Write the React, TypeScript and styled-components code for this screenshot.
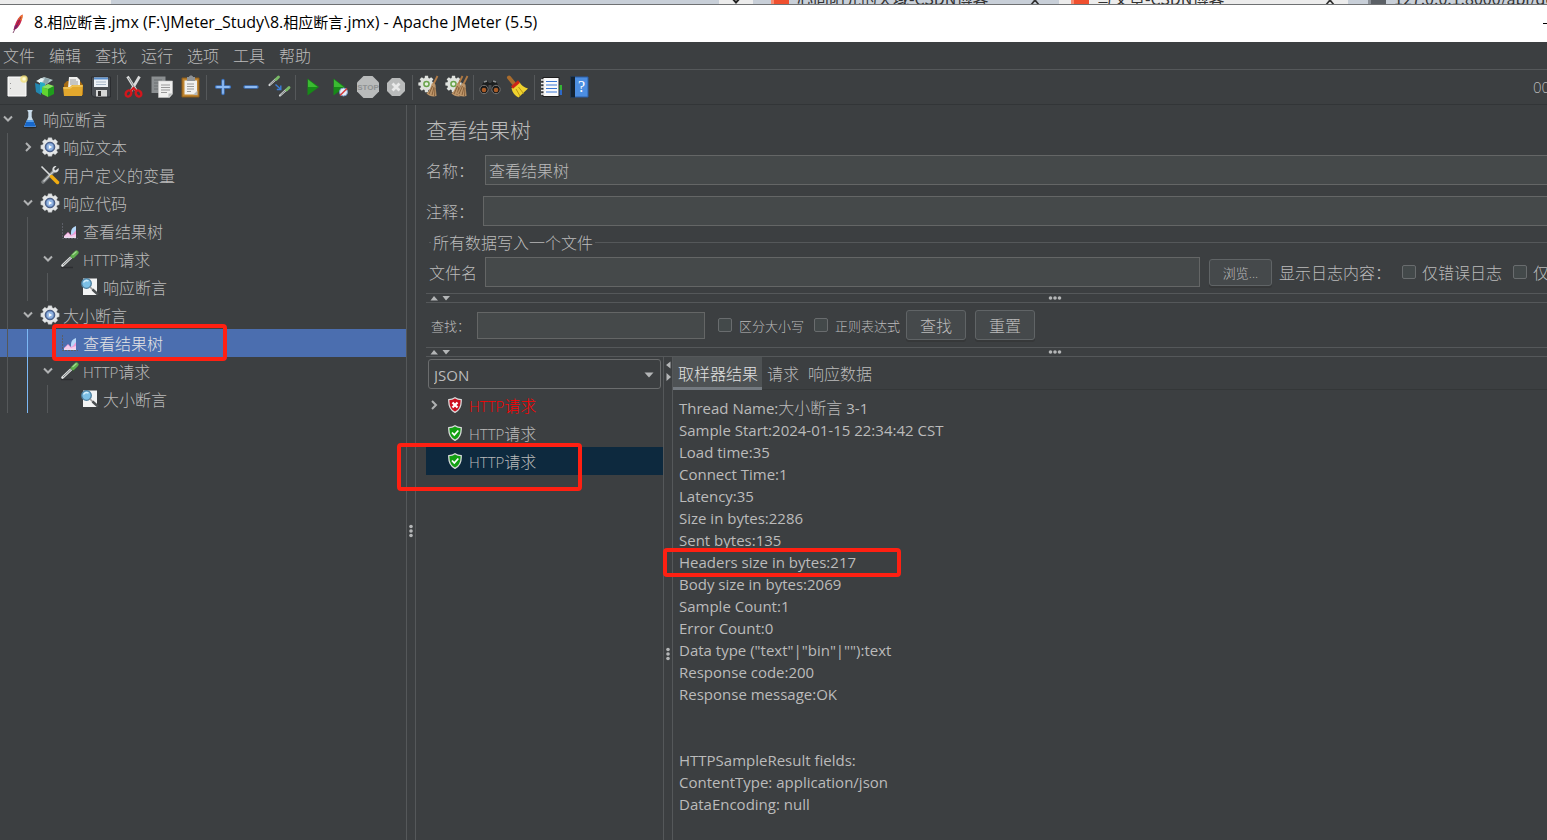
import React from "react";
import styled, { createGlobalStyle, css } from "styled-components";

const c = {
  bg: "#3c3f41",
  line: "#55585a",
  text: "#bbbbbb",
  field: "#45494a",
  border: "#646666",
  select: "#4b6eaf",
  listSelect: "#0d293e",
  mark: "#ff2012",
};

const GlobalStyle = createGlobalStyle`
  * { box-sizing: border-box; }
  body { margin: 0; background: ${c.bg}; overflow: hidden; }
  body, button, input, select {
    font-family: "Open Sans", "Noto Sans CJK SC", sans-serif;
    font-size: 16px;
    font-weight: 300;
    color: ${c.text};
  }
  button { background: none; border: 0; padding: 0; margin: 0; }
`;

const Window = styled.div`
  display: flex;
  flex-direction: column;
  height: 100vh;
  overflow: hidden;
  background: ${c.bg};
`;

/* ---------- browser strip behind the window ---------- */
const BrowserStrip = styled.div`
  display: flex;
  height: 5px;
  flex: none;
  overflow: hidden;
  border-bottom: 1px solid #6f7173;
  background: #c6cdd6;
`;
const StripPart = styled.div<{ $w?: number; $light?: boolean; $pad?: number }>`
  display: flex;
  align-items: flex-end;
  height: 4px;
  width: ${(p) => (p.$w ? p.$w + "px" : "auto")};
  flex: ${(p) => (p.$w ? "none" : "1")};
  padding: 0 ${(p) => p.$pad ?? 0}px;
  background: ${(p) => (p.$light ? "#ececec" : "#c8cfd8")};
  overflow: hidden;
`;
const StripText = styled.span`
  flex: 1;
  min-width: 0;
  margin: 0 0 -5px 8px;
  font-family: "Noto Sans CJK SC", sans-serif;
  font-size: 16px;
  line-height: 22px;
  font-weight: 400;
  color: #333;
  white-space: nowrap;
`;
const Favicon = styled.span<{ $grey?: boolean }>`
  width: 18px;
  height: 4px;
  flex: none;
  background: ${(p) => (p.$grey ? "#5b6066" : "#f0502f")};
  border-left: 3px solid ${(p) => (p.$grey ? "#8b9097" : "#f88a70")};
`;

/* ---------- title, menu, toolbar ---------- */
const TitleBar = styled.header`
  display: flex;
  align-items: center;
  flex: none;
  height: 37px;
  padding-left: 8px;
  gap: 6px;
  background: #fff;
  color: #000;
  font-weight: 400;
  white-space: pre;
`;
const TitleText = styled.span`
  flex: 1;
  margin-bottom: 3px;
`;
const TitleCjk = styled.span`
  font-size: 15px;
`;
const Minimise = styled.button`
  width: 4px;
  height: 1px;
  background: #000;
`;
const MenuBar = styled.nav`
  display: flex;
  flex: none;
  height: 28px;
  padding: 0 0 2px 3px;
  gap: 14px;
  border-bottom: 1px solid ${c.line};
`;
const MenuItem = styled.button`
  width: 32px;
  white-space: nowrap;
`;
const Toolbar = styled.div`
  display: flex;
  align-items: center;
  flex: none;
  height: 35px;
  padding-left: 3px;
  border-bottom: 1px solid #323537;
`;
const ToolButton = styled.button`
  display: grid;
  place-items: center;
  width: 28px;
  height: 28px;
`;
const ToolSep = styled.span`
  width: 1px;
  height: 25px;
  margin: 0 2px;
  background: ${c.line};
`;
const Clock = styled.span`
  width: 14px;
  margin-left: auto;
  overflow: hidden;
  font-size: 15px;
`;

/* ---------- body ---------- */
const Body = styled.div`
  display: flex;
  flex: 1;
  min-height: 0;
`;
const Tree = styled.div`
  width: 406px;
  flex: none;
`;
const VSplit = styled.div<{ $top: number }>`
  position: relative;
  display: flex;
  flex-direction: column;
  align-items: center;
  width: 10px;
  flex: none;
  border-left: 1px solid ${c.line};
  border-right: 1px solid ${c.line};
  padding-top: ${(p) => p.$top}px;
`;
const ArrowPair = styled.div`
  position: absolute;
  top: 4px;
  left: 1px;
  display: flex;
`;
const TreeRow = styled.div<{ $selected?: boolean }>`
  position: relative;
  display: flex;
  align-items: center;
  height: 28px;
  white-space: nowrap;
  background: ${(p) => (p.$selected ? c.select : "transparent")};
  color: ${(p) => (p.$selected ? "#e4e4e4" : c.text)};
`;
const Guide = styled.span<{ $kind: "line" | "blue" | "none" }>`
  width: 13px;
  height: 28px;
  margin-left: 7px;
  flex: none;
  border-left: 1px solid
    ${(p) => (p.$kind === "line" ? "#55585a" : p.$kind === "blue" ? "#7cb8f5" : "transparent")};
`;
const Chevron = styled.span`
  display: grid;
  place-items: center;
  width: 15px;
  flex: none;
`;
const TreeIcon = styled.span`
  display: grid;
  place-items: center;
  width: 22px;
  margin: 0 2px 0 4px;
  flex: none;
`;
const Latin = styled.span`
  font-size: 15px;
`;
const Mark = styled.span<{ $x: number; $y: number; $w: number; $h: number }>`
  position: absolute;
  z-index: 2;
  left: ${(p) => p.$x}px;
  top: ${(p) => p.$y}px;
  width: ${(p) => p.$w}px;
  height: ${(p) => p.$h}px;
  border: 4px solid ${c.mark};
  border-radius: 4px;
  pointer-events: none;
`;

const Panel = styled.main`
  display: flex;
  flex-direction: column;
  flex: 1;
  min-width: 0;
  padding-left: 10px;
`;
const Heading = styled.h1`
  margin: 0;
  height: 50px;
  flex: none;
  font-size: 21px;
  line-height: 50px;
  font-weight: 300;
`;
const inputBox = css`
  height: 30px;
  padding: 0 3px;
  border: 1px solid ${c.border};
  border-radius: 0;
  background: ${c.field};
  outline: 0;
`;
const FormRow = styled.div<{ $gap: number; $label: number }>`
  display: flex;
  align-items: center;
  flex: none;
  margin-bottom: ${(p) => p.$gap}px;
  label:first-child {
    width: ${(p) => p.$label}px;
    flex: none;
  }
`;
const WideInput = styled.input`
  ${inputBox}
  flex: 1;
  min-width: 0;
  margin-right: -2px;
`;
const FileGroup = styled.fieldset`
  margin: 0;
  padding: 0 0 0 3px;
  border: 0;
  min-width: 0;
  flex: none;
  height: 63px;
  overflow: hidden;
`;
const GroupTitle = styled.div`
  display: flex;
  align-items: center;
  gap: 2px;
  height: 24px;
  white-space: nowrap;
  &::before, &::after {
    content: "";
    height: 1px;
    width: 2px;
    background: ${c.line};
  }
  &::after { flex: 1; }
`;
const FileRow = styled.div`
  display: flex;
  align-items: center;
  height: 30px;
  margin-top: 3px;
  white-space: nowrap;
`;
const FileInput = styled.input`
  ${inputBox}
  flex: 1;
  min-width: 0;
  margin: 0 9px 0 8px;
`;
const Button = styled.button<{ $small?: boolean }>`
  flex: none;
  width: ${(p) => (p.$small ? 63 : 60)}px;
  height: ${(p) => (p.$small ? 27 : 30)}px;
  border: 1px solid #606466;
  border-radius: 3px;
  background: #45494b;
  box-shadow: 0 2px 0 #363839;
  font-size: ${(p) => (p.$small ? 13 : 16)}px;
`;
const LogLabel = styled.span`
  width: 123px;
  flex: none;
  margin-left: 7px;
`;
const CheckLabel = styled.label<{ $w?: number; $small?: boolean; $gap?: number }>`
  display: flex;
  align-items: center;
  gap: ${(p) => p.$gap ?? 6}px;
  width: ${(p) => p.$w}px;
  flex: none;
  overflow: hidden;
  white-space: nowrap;
  font-size: ${(p) => (p.$small ? 13 : 16)}px;
`;
const Check = styled.input`
  appearance: none;
  width: 14px;
  height: 14px;
  flex: none;
  margin: 0;
  border: 1px solid #696c6e;
  border-radius: 2px;
  background: #43494a;
`;
const HSplit = styled.div`
  display: flex;
  align-items: center;
  flex: none;
  height: 10px;
  padding-left: 4px;
  gap: 598px;
  border-top: 1px solid ${c.line};
  border-bottom: 1px solid ${c.line};
`;
const SearchRow = styled.div`
  display: flex;
  align-items: center;
  flex: none;
  height: 44px;
  padding-left: 5px;
  font-size: 13px;
  label:first-child {
    width: 46px;
    flex: none;
  }
`;
const SearchInput = styled.input`
  ${inputBox}
  height: 27px;
  width: 228px;
  margin-right: 13px;
`;
const Buttons = styled.div`
  display: flex;
  gap: 9px;
  margin-left: 4px;
`;
const Results = styled.div`
  display: flex;
  flex: 1;
  min-height: 0;
`;
const ResultList = styled.div`
  width: 237px;
  flex: none;
  padding-top: 2px;
`;
const SelectWrap = styled.div`
  position: relative;
  height: 32px;
  padding: 0 2px;
`;
const Select = styled.select`
  appearance: none;
  display: block;
  width: 100%;
  height: 30px;
  padding: 2px 5px 0;
  border: 1px solid #6b6d6e;
  border-radius: 3px;
  background: ${c.bg};
  font-size: 15px;
  font-weight: 400;
`;
const SelectArrow = styled.svg`
  position: absolute;
  right: 9px;
  top: 13px;
  pointer-events: none;
`;
const ResultRow = styled.div<{ $selected?: boolean; $error?: boolean }>`
  position: relative;
  display: flex;
  align-items: center;
  height: 28px;
  white-space: nowrap;
  background: ${(p) => (p.$selected ? c.listSelect : "transparent")};
  color: ${(p) => (p.$error ? "#ff0000" : c.text)};
`;
const ShieldBox = styled.span`
  display: grid;
  place-items: center;
  width: 20px;
  margin: 0 4px;
`;
const Detail = styled.section`
  display: flex;
  flex-direction: column;
  flex: 1;
  min-width: 0;
`;
const Tabs = styled.div`
  display: flex;
  flex: none;
  height: 33px;
  border-bottom: 1px solid #343738;
`;
const Tab = styled.button<{ $active?: boolean }>`
  height: 33px;
  padding: 2px 4px 0 5px;
  border-bottom: 3px solid ${(p) => (p.$active ? "#747a80" : "transparent")};
  background: ${(p) => (p.$active ? "#4e5254" : "transparent")};
  background-clip: padding-box;
  color: ${(p) => (p.$active ? "#e0e0e0" : c.text)};
`;
const Report = styled.div`
  padding: 7px 0 0 6px;
  font-size: 15px;
  font-weight: 400;
  line-height: 22px;
`;
const ReportLine = styled.div`
  position: relative;
  height: 22px;
  white-space: nowrap;
`;
const Cjk = styled.span`
  font-size: 16px;
  font-weight: 300;
`;

/* ---------- small drawings ---------- */
const Dots = ({ vertical }: { vertical?: boolean }) => (
  <svg width={vertical ? 4 : 14} height={vertical ? 14 : 4} viewBox={vertical ? "0 0 4 14" : "0 0 14 4"} fill="#b4b6b7">
    {[2.5, 7, 11.5].map((p) => (
      <circle key={p} cx={vertical ? 2 : p} cy={vertical ? p : 2} r="1.8" />
    ))}
  </svg>
);
const UpDown = () => (
  <svg width="20" height="6" viewBox="0 0 20 6" fill="#b4b6b7">
    <path d="M0.5 5.5L4 1L8 5.5zM12.5 1h7.5L16 5.5z" />
  </svg>
);
const LeftRight = () => (
  <svg width="7" height="20" viewBox="0 0 7 20" fill="#b4b6b7">
    <path d="M5.500 0.500v7L1 4zM1.500 12v8L6 16z" />
  </svg>
);
const Chev = ({ open }: { open?: boolean }) => (
  <svg width="12" height="12" viewBox="0 0 12 12" fill="none" stroke="#b0b2b3" strokeWidth="2">
    <path d={open ? "M2 3.500L6 7.500L10 3.500" : "M4 2L8 6L4 10"} />
  </svg>
);
const StripArrow = () => (
  <svg width="12" height="4" viewBox="0 0 12 4"><path d="M2 -2L6 2.500L10 -2" fill="none" stroke="#222" strokeWidth="2" /></svg>
);
const StripClose = () => (
  <svg width="12" height="4" viewBox="0 0 12 4"><path d="M2 5L6 0L10 5" fill="none" stroke="#333" strokeWidth="1.700" /></svg>
);

const svg = (w: number, kids: React.ReactNode, h = w) => (
  <svg width={w} height={h} viewBox={`0 0 ${w} ${h}`}>{kids}</svg>
);

const Feather = () => (
  <svg width="20" height="20" viewBox="0 0 20 20">
    <path d="M14.500 0.500C11.500 2 8.500 6 7 11L5.500 16L8.500 14.500C12 12 14.500 6 14.500 0.500z" fill="#c7254e" />
    <path d="M14.500 0.500C12.500 1.500 11 3.500 10 5.500L13.500 6.500C14.500 4 15 2 14.500 0.500z" fill="#f2762a" />
    <path d="M7 11L5.500 16L8.500 14.500L10.500 11z" fill="#8a2676" />
    <path d="M13 3L5 19" stroke="#6b2350" strokeWidth="0.8" />
  </svg>
);
const FlaskIcon = () => svg(20, <>
  <ellipse cx="10" cy="18" rx="7" ry="1.300" fill="#25282a" />
  <path d="M7.500 1h5v1l-.8 1v5l4.300 10H4l4.300-10V3L7.500 2z" fill="#c9dcea" />
  <path d="M7 11h6l3 6.800H4z" fill="#1768cc" /><path d="M7 11h6l.9 2H6.100z" fill="#59a0ea" />
</>);
const gearPath = (cx: number, cy: number, r1: number, r2: number) => {
  const pts: string[] = [];
  for (let i = 0; i < 8; i++) {
    [[-0.3, r1], [-0.19, r2], [0.19, r2], [0.3, r1]].forEach(([d, r]) => {
      const a = (i * Math.PI) / 4 + d;
      pts.push(`${(cx + r * Math.sin(a)).toFixed(2)} ${(cy - r * Math.cos(a)).toFixed(2)}`);
    });
  }
  return "M" + pts.join("L") + "z";
};
const GearIcon = () => svg(20, <>
  <path d={gearPath(10, 10, 7.5, 9.3)} fill="#e4e6e7" stroke="#b9bcbe" strokeWidth="0.5" />
  <circle cx="10" cy="10" r="4.800" fill="#5f7fb4" stroke="#3f527a" strokeWidth="1" />
  <circle cx="10" cy="10" r="3.400" fill="#8fb2e0" /><path d="M8.800 8L12.200 10L8.800 12z" fill="#fff" />
</>);
const ToolsIcon = () => svg(20, <>
  <path d="M3 17L13.500 6.500" stroke="#777b7d" strokeWidth="3.500" strokeLinecap="round" />
  <path d="M3.500 16.500L14 6" stroke="#c9cccd" strokeWidth="1.500" />
  <path d="M18.500 3l-3 2.500-1.500-1.500 2.500-3C13.500 0.500 12 3 12.500 5.500l2 2C17 8 19.500 6 18.500 3z" fill="#dcdedf" />
  <path d="M1.500 1.500L11 11" stroke="#d8dadb" strokeWidth="1.600" />
  <path d="M11.500 11.500L17.500 17.500" stroke="#f0ac10" strokeWidth="3.500" strokeLinecap="round" />
</>);
const ChartIcon = () => svg(16, <>
  <path d="M.5 0v15.500H16" stroke="#5c5e66" strokeDasharray="2 1" fill="none" />
  <path d="M9 14V9c0-3 2-5 5-6v11z" fill="#b5d8fa" />
  <path d="M2 15v-2l4-4 3 3 2-1 3-4v8z" fill="#ee9ad6" />
  <path d="M2 13.500l4-3.500 3 3 2-1 3-1v4H2z" fill="#f4cdec" /><path d="M2 14.500h12" stroke="#e8ddf0" />
</>);
const DropperIcon = () => svg(20, <>
  <path d="M1 18.500h12" stroke="#2c2e30" strokeWidth="1.500" />
  <path d="M2.500 16.500L11.500 8" stroke="#dfe1e1" strokeWidth="2.600" strokeLinecap="round" />
  <path d="M3 16L11 8.500" stroke="#74787a" strokeWidth="0.900" />
  <path d="M10 6L14 10" stroke="#2f5b2c" strokeWidth="1.600" />
  <path d="M13 7L16.500 3.500" stroke="#5fae4d" strokeWidth="4.200" strokeLinecap="round" />
  <path d="M12.500 6L16.500 2.500" stroke="#a5da93" strokeWidth="1.200" />
</>);
const MagnifierIcon = () => svg(20, <>
  <path d="M3 1.500h14V18H3z" fill="#f3f4f4" />
  <circle cx="6.500" cy="6.500" r="4.800" fill="#7cc0e6" stroke="#4d7f9f" strokeWidth="1.300" />
  <path d="M3.500 5.500c1-2 3-2.500 5-1.500" stroke="#d6effc" strokeWidth="1.400" fill="none" />
  <path d="M10 10l3 3" stroke="#999" strokeWidth="1.600" /><path d="M12.500 12.500l5.500 5" stroke="#4b4f51" strokeWidth="2.400" />
</>);
const Shield = ({ ok }: { ok?: boolean }) => svg(16, <>
  <path d="M8 .7C6 2.200 4 2.600 1.800 2.600 1.500 8 2.500 12.500 8 15.300 13.500 12.500 14.500 8 14.200 2.600 12 2.600 10 2.200 8 .7z"
    fill={ok ? "#12a012" : "#cc1020"} stroke="#d9dbdb" strokeWidth="1.300" />
  {ok ? <path d="M5 7.500l2.300 2.500L11.300 5.500" stroke="#fff" strokeWidth="1.800" fill="none" />
    : <path d="M5.500 5.500l5 5M10.500 5.500l-5 5" stroke="#fff" strokeWidth="2.200" />}
</>);

const broom = (x: number) => (
  <g transform={`translate(${x} 0)`}>
    <path d="M18.500 1L14.500 9" stroke="#b07a45" strokeWidth="1.800" />
    <path d="M13 8l3.500 1.500L17.500 21C14 22 10 21 7.500 18.500c3-2.500 4-6 5.500-10.500z" fill="#bd9569" />
    <path d="M13.500 11L10 19M15 12l-2 8M16 13l-.5 8" stroke="#805a35" strokeWidth="0.900" />
  </g>
);
const toolGear = (
  <>
    <path d={gearPath(8.5, 9, 6.3, 8.3)} fill="#dfe2de" />
    <circle cx="8.500" cy="9" r="3.300" fill="#69a34b" /><circle cx="8.500" cy="9" r="1.800" fill="#e5efe0" />
  </>
);
const pipette = (x: number, y: number) => (
  <g transform={`translate(${x} ${y})`}>
    <path d="M1 9L7 3.500" stroke="#d3d6d6" strokeWidth="2.200" strokeLinecap="round" />
    <path d="M1.500 8.500L6.500 4" stroke="#55595b" strokeWidth="0.700" />
    <path d="M7.500 3.500L10 1" stroke="#79b967" strokeWidth="2.800" strokeLinecap="round" />
  </g>
);

const tools: ({ name: string; art: React.ReactNode } | null)[] = [
  { name: "新建", art: <>
    <path d="M3 2h18v19H3z" fill="#e9e9e7" stroke="#fff" /><path d="M5.500 8v1M5.500 13v1" stroke="#999" />
    <circle cx="19" cy="4" r="3.800" fill="#f2df71" opacity=".75" /><circle cx="19" cy="4" r="1.700" fill="#fffbd0" /></> },
  { name: "模板", art: <>
    <path d="M3 6l8-4 9 3-8 5z" fill="#b7c9cd" /><path d="M2 8l6 2v10l-5-3z" fill="#2287b0" /><path d="M4 6l4-3 3 1-3 5z" fill="#e7f3f3" />
    <path d="M7 7l5 1v12l-5-3z" fill="#25abc4" /><path d="M12 3l5 1-3 5-4-1z" fill="#8ba5ab" /><path d="M9 12l6 2v8l-6-3z" fill="#61d431" />
    <path d="M15 14l6-3v8l-6 3z" fill="#1f9d1c" /><path d="M9 12l6-3 6 2-6 3z" fill="#8be35e" /></> },
  { name: "打开", art: <>
    <path d="M3 9l3-3h13l3 4v10H3z" fill="#a66b12" /><path d="M8 2h8l3 3v8H7z" fill="#f1f1ef" /><path d="M9 5h6M9 7h8M9 9h8" stroke="#999" />
    <path d="M2 12h7l2-2h11l-1 11H3z" fill="#e3a82d" /><path d="M2.500 13h7l2-2h10" stroke="#f7d777" fill="none" /></> },
  { name: "保存", art: <>
    <path d="M2.500 2h19v20h-17l-2-2z" fill="#4b4f54" stroke="#2b2d30" /><path d="M5 2.500h14V12H5z" fill="#eef2f7" />
    <path d="M5 3.500h14" stroke="#5b91cf" strokeWidth="2" /><path d="M7 7h10M7 9.500h10" stroke="#a8b7c8" />
    <path d="M7 15h11v6.500H7z" fill="#d6d7d7" /><path d="M9 16h3v5H9z" fill="#333" /></> },
  null,
  { name: "剪切", art: <>
    <path d="M5.500 1.500L14.500 16M17.500 1.500L9 16" stroke="#d9dada" strokeWidth="2.800" /><path d="M6.500 3l7 11" stroke="#8a8e8f" />
    <ellipse cx="6.500" cy="18.500" rx="2.600" ry="3.200" fill="none" stroke="#d3161c" strokeWidth="2.400" transform="rotate(35 6.500 18.500)" />
    <ellipse cx="16.500" cy="18.500" rx="2.600" ry="3.200" fill="none" stroke="#d3161c" strokeWidth="2.400" transform="rotate(-35 16.500 18.500)" />
    <path d="M8.500 16L11.500 13L14.500 16" stroke="#d3161c" strokeWidth="2.200" fill="none" /></> },
  { name: "复制", art: <>
    <path d="M1.500 1.500h14V18h-14z" fill="#8b8f91" /><path d="M4 5h8M4 8h5M4 11h4M4 14h4" stroke="#6c7072" />
    <path d="M8.500 6h14v13l-3 3.500h-11z" fill="#efefee" stroke="#c5c5c5" strokeWidth=".6" /><path d="M11 10h9M11 12.500h9M11 15h9M11 17.500h6" stroke="#999" /><path d="M22.500 18.500h-4v4z" fill="#b9bbbb" /></> },
  { name: "粘贴", art: <>
    <path d="M4 3h17v19H4z" fill="#c08530" stroke="#8a5a18" /><path d="M6.500 5.500h12.500v14H6.500z" fill="#f0f0ee" />
    <path d="M9 2h2c0-2 4-2 4 0h2v4H9z" fill="#8e9295" /><path d="M9 9h7M9 11.500h7M9 14h7M9 16.500h4" stroke="#9a9a9a" /><path d="M15 20l4.500-4.500V20z" fill="#b6b8b8" /></> },
  null,
  { name: "展开", art: <><path d="M12 5.500v13M5.500 12h13" stroke="#3f74bd" strokeWidth="3.400" strokeLinecap="round" /><path d="M12 6v12M6 12h12" stroke="#8dbaf2" strokeWidth="1.800" strokeLinecap="round" /></> },
  { name: "折叠", art: <><path d="M6 12h12" stroke="#3f74bd" strokeWidth="3.400" strokeLinecap="round" /><path d="M6.500 12h11" stroke="#8dbaf2" strokeWidth="1.800" strokeLinecap="round" /></> },
  { name: "切换", art: <>{pipette(1.5, 1)}{pipette(12, 11.5)}<path d="M8.500 9.500l5 4.500M13.800 10.500v4h-4" stroke="#3d7ed8" strokeWidth="1.400" fill="none" /></> },
  null,
  { name: "启动", art: <><path d="M7.500 3.500L19 12L7.500 20.500z" fill="#178a18" /><path d="M8 4.500L17.500 12H8z" fill="#3bbb32" /></> },
  { name: "不停顿开始", art: <><path d="M5.500 3.500L17 12L5.500 20.500z" fill="#178a18" /><path d="M6 4.500L15.500 12H6z" fill="#3bbb32" />
    <circle cx="15.500" cy="17" r="4" fill="#e7eef7" stroke="#7a9bc8" /><path d="M12 20.500L19 13.500" stroke="#d33c3c" strokeWidth="1.600" /></> },
  { name: "停止", art: <><path d="M7.500 1h9L23 7.500v9L16.500 23h-9L1 16.500v-9z" fill="#b9bbbb" />
    <text x="12" y="15" textAnchor="middle" fontSize="8" fontWeight="700" fontFamily="Liberation Sans, sans-serif" fill="#8f9292">STOP</text></> },
  { name: "关闭", art: <><path d="M8 3h8l5 5v8l-5 5H8l-5-5V8z" fill="#b9bbbb" /><path d="M8.500 8.500l7 7M15.500 8.500l-7 7" stroke="#e8e9e9" strokeWidth="2.800" /></> },
  null,
  { name: "清除", art: <g transform="translate(1 0)">{toolGear}{broom(1)}</g> },
  { name: "清除全部", art: <g>{toolGear}{broom(-1)}{broom(4)}</g> },
  null,
  { name: "查找", art: <>
    <path d="M5 8l4-3 2 3h2l2-3 4 3 3 6H2z" fill="#1d1f20" /><path d="M6 7l3-1M15 6l3 1" stroke="#8c9092" strokeWidth="1.500" /><circle cx="6" cy="14.500" r="4.200" fill="#191919" stroke="#777" />
    <circle cx="18" cy="14.500" r="4.200" fill="#191919" stroke="#777" /><circle cx="6" cy="15" r="2.300" fill="#a95c28" /><circle cx="18" cy="15" r="2.300" fill="#a95c28" />
    <path d="M10.500 10h3v4h-3z" fill="#4b4e50" /></> },
  { name: "重置查找", art: <>
    <path d="M3 2.500L7.500 8" stroke="#a96c2d" strokeWidth="4" strokeLinecap="round" /><path d="M8.500 9l5-2C15 10 18 12.500 22 13.500L12.500 22.500C9 20.500 6.500 18 5.500 13.500z" fill="#efd22e" />
    <path d="M6 12.500l7-6" stroke="#cc2418" strokeWidth="3" /><path d="M10 14l4 7M12.500 12l5 6.500" stroke="#b89312" /></> },
  null,
  { name: "函数助手", art: <>
    <path d="M19 10h4v5h-4z" fill="#35b535" /><path d="M19 15h4v5h-4z" fill="#2e6ac8" /><path d="M4 2.500h16v19H4z" fill="#fafafa" stroke="#1e1e1e" />
    <path d="M7 6.500h11M7 10h11M7 13.500h11M7 17h11" stroke="#3977d3" strokeWidth="1.200" /><path d="M2 5h4M2 8.500h4M2 12h4M2 15.500h4M2 19h4" stroke="#eee" strokeWidth="1.600" /></> },
  { name: "帮助", art: <><path d="M4 2h17v20H4z" fill="#4c8ee2" stroke="#2b5fa8" /><path d="M3.500 1.500H8v21H3.500z" fill="#15222f" />
    <text x="14.500" y="17" textAnchor="middle" fontSize="16" fontFamily="Liberation Serif, serif" fill="#fff">?</text></> },
];

type G = "line" | "blue" | "none";
const http = (<><Latin>HTTP</Latin>请求</>);
const rows: { guides: G[]; open?: boolean; icon: React.ReactNode; text: React.ReactNode; selected?: boolean }[] = [
  { guides: [], open: true, icon: <FlaskIcon />, text: "响应断言" },
  { guides: ["line"], open: false, icon: <GearIcon />, text: "响应文本" },
  { guides: ["line"], icon: <ToolsIcon />, text: "用户定义的变量" },
  { guides: ["line"], open: true, icon: <GearIcon />, text: "响应代码" },
  { guides: ["line", "line"], icon: <ChartIcon />, text: "查看结果树" },
  { guides: ["line", "line"], open: true, icon: <DropperIcon />, text: http },
  { guides: ["line", "line", "line"], icon: <MagnifierIcon />, text: "响应断言" },
  { guides: ["line"], open: true, icon: <GearIcon />, text: "大小断言" },
  { guides: ["line", "blue"], icon: <ChartIcon />, text: "查看结果树", selected: true },
  { guides: ["line", "blue"], open: true, icon: <DropperIcon />, text: http },
  { guides: ["line", "blue", "line"], icon: <MagnifierIcon />, text: "大小断言" },
];

const report = [
  "Sample Start:2024-01-15 22:34:42 CST", "Load time:35", "Connect Time:1", "Latency:35",
  "Size in bytes:2286", "Sent bytes:135", "Headers size in bytes:217", "Body size in bytes:2069",
  "Sample Count:1", "Error Count:0", 'Data type ("text"|"bin"|""):text', "Response code:200",
  "Response message:OK", "", "", "HTTPSampleResult fields:", "ContentType: application/json",
  "DataEncoding: null",
];

export default function App() {
  return (
    <Window>
      <GlobalStyle />
      <BrowserStrip>
        <StripPart $w={111} $light />
        <StripPart $w={608} />
        <StripPart $w={34} $light $pad={11}><StripArrow /></StripPart>
        <StripPart $w={306} $pad={18}><Favicon /><StripText>心向阳光的天域-CSDN博客</StripText><StripClose /></StripPart>
        <StripPart $w={289} $light $pad={12}><Favicon /><StripText>写文章-CSDN博客</StripText><StripClose /></StripPart>
        <StripPart $pad={20}><Favicon $grey /><StripText>127.0.0.1:8000/api/de</StripText></StripPart>
      </BrowserStrip>
      <TitleBar>
        <Feather />
        <TitleText>8.<TitleCjk>相应断言</TitleCjk>.jmx (F:\JMeter_Study\8.<TitleCjk>相应断言</TitleCjk>.jmx) - Apache JMeter (5.5)</TitleText>
        <Minimise aria-label="最小化" />
      </TitleBar>
      <MenuBar>
        {["文件", "编辑", "查找", "运行", "选项", "工具", "帮助"].map((m) => <MenuItem key={m}>{m}</MenuItem>)}
      </MenuBar>
      <Toolbar>
        {tools.map((t, i) => t
          ? <ToolButton key={i} aria-label={t.name}>{svg(24, t.art)}</ToolButton>
          : <ToolSep key={i} />)}
        <Clock>00:00:00</Clock>
      </Toolbar>
      <Body>
        <Tree role="tree">
          {rows.map((r, i) => (
            <TreeRow key={i} role="treeitem" aria-selected={!!r.selected} $selected={r.selected}>
              {r.guides.map((g, j) => <Guide key={j} $kind={g} />)}
              <Chevron>{r.open !== undefined && <Chev open={r.open} />}</Chevron>
              <TreeIcon>{r.icon}</TreeIcon>
              <span>{r.text}</span>
              {r.selected && <Mark $x={52} $y={-5} $w={175} $h={37} />}
            </TreeRow>
          ))}
        </Tree>
        <VSplit $top={419}><Dots vertical /></VSplit>
        <Panel>
          <Heading>查看结果树</Heading>
          <FormRow $gap={11} $label={59}>
            <label htmlFor="name">名称：</label>
            <WideInput id="name" defaultValue="查看结果树" />
          </FormRow>
          <FormRow $gap={4} $label={57}>
            <label htmlFor="comment">注释：</label>
            <WideInput id="comment" />
          </FormRow>
          <FileGroup aria-label="所有数据写入一个文件">
            <GroupTitle>所有数据写入一个文件</GroupTitle>
            <FileRow>
              <label htmlFor="file">文件名</label>
              <FileInput id="file" />
              <Button $small>浏览...</Button>
              <LogLabel>显示日志内容：</LogLabel>
              <CheckLabel $w={111}><Check type="checkbox" />仅错误日志</CheckLabel>
              <CheckLabel $w={34}><Check type="checkbox" />仅成功日志</CheckLabel>
            </FileRow>
          </FileGroup>
          <HSplit><UpDown /><Dots /></HSplit>
          <SearchRow>
            <label htmlFor="search">查找：</label>
            <SearchInput id="search" />
            <CheckLabel $w={96} $small $gap={7}><Check type="checkbox" />区分大小写</CheckLabel>
            <CheckLabel $w={88} $small $gap={7}><Check type="checkbox" />正则表达式</CheckLabel>
            <Buttons><Button>查找</Button><Button>重置</Button></Buttons>
          </SearchRow>
          <HSplit><UpDown /><Dots /></HSplit>
          <Results>
            <ResultList>
              <SelectWrap>
                <Select aria-label="格式" defaultValue="JSON"><option>JSON</option></Select>
                <SelectArrow width="10" height="6" viewBox="0 0 10 6"><path d="M.5.500h9L5 5.500z" fill="#b4b6b7" /></SelectArrow>
              </SelectWrap>
              <ResultRow $error><Chevron><Chev /></Chevron><ShieldBox><Shield /></ShieldBox><span>{http}</span></ResultRow>
              <ResultRow><Chevron /><ShieldBox><Shield ok /></ShieldBox><span>{http}</span></ResultRow>
              <ResultRow $selected>
                <Chevron /><ShieldBox><Shield ok /></ShieldBox><span>{http}</span>
                <Mark $x={-29} $y={-4} $w={185} $h={48} />
              </ResultRow>
            </ResultList>
            <VSplit $top={290}><ArrowPair><LeftRight /></ArrowPair><Dots vertical /></VSplit>
            <Detail>
              <Tabs role="tablist">
                <Tab role="tab" $active>取样器结果</Tab><Tab role="tab">请求</Tab><Tab role="tab">响应数据</Tab>
              </Tabs>
              <Report>
                <ReportLine>Thread Name:<Cjk>大小断言</Cjk> 3-1</ReportLine>
                {report.map((t, i) => (
                  <ReportLine key={i}>
                    {t}
                    {t.startsWith("Headers") && <Mark $x={-16} $y={-3} $w={238} $h={29} />}
                  </ReportLine>
                ))}
              </Report>
            </Detail>
          </Results>
        </Panel>
      </Body>
    </Window>
  );
}
